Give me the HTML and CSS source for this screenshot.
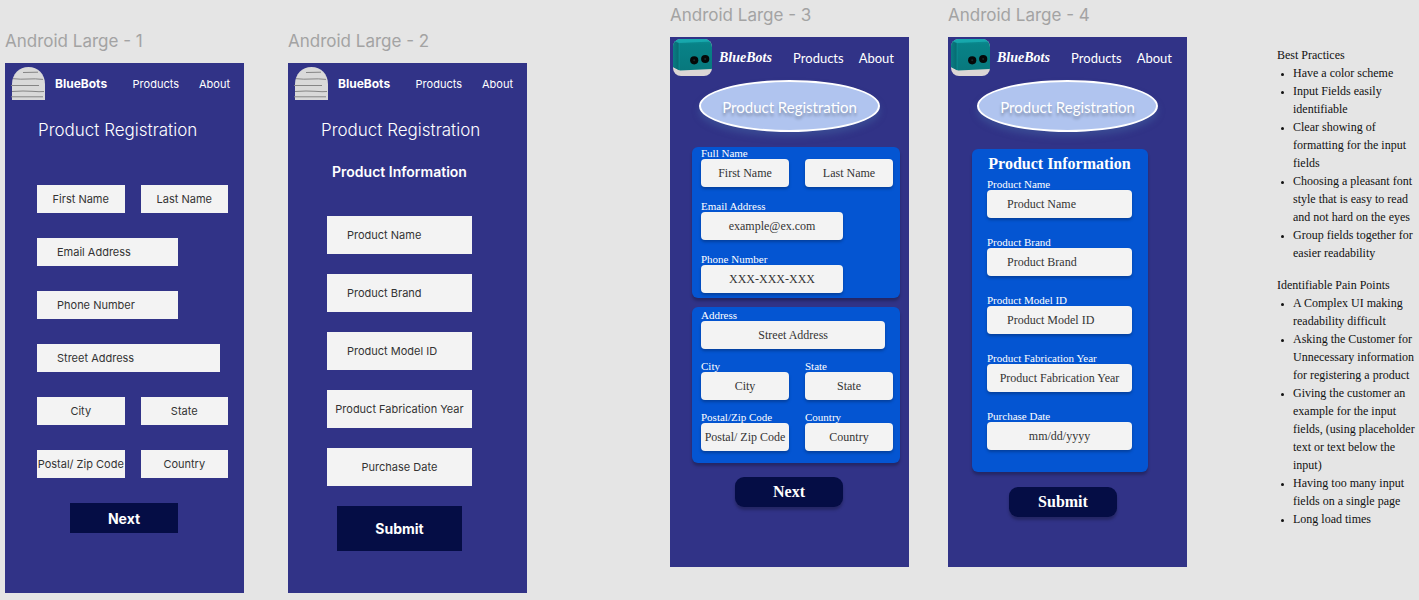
FILE: index.html
```html
<!DOCTYPE html>
<html lang="en">
<head>
<meta charset="utf-8">
<meta name="viewport" content="width=device-width, initial-scale=1">
<title>BlueBots product registration</title>
<link rel="stylesheet" href="styles.css">
</head>
<body>
<svg class="defs" width="0" height="0" aria-hidden="true">
  <defs>
    <linearGradient id="teal" x1="0" y1="0" x2="0" y2="1">
      <stop offset="0" stop-color="#0d9197"/>
      <stop offset=".18" stop-color="#088287"/>
      <stop offset="1" stop-color="#08787d"/>
    </linearGradient>
    <linearGradient id="side" x1="0" y1="0" x2="1" y2="0">
      <stop offset="0" stop-color="#0a7c84"/>
      <stop offset="1" stop-color="#066a70"/>
    </linearGradient>
    <clipPath id="round"><rect width="39" height="37" rx="8"/></clipPath>
    <symbol id="arch" viewBox="0 0 34 33">
      <path d="M1 33V17C1 7 8 0 17.500 0S34 7 34 17V33Z" fill="#d9d9d9"/>
      <g fill="none" stroke="#858585" stroke-width="1">
        <path d="M12 5.500l15-.3M2 11.700q8 .8 15 .3t15 .4M0 18.500h28M1 24.500q12-.9 20-.2t12 .2M0 29.800h32"/>
      </g>
    </symbol>
    <symbol id="bot" viewBox="0 0 39 37">
      <g clip-path="url(#round)">
        <rect width="39" height="37" fill="#dcd6d5"/>
        <path d="M0 0H39V30L7 31.500L0 28Z" fill="url(#teal)"/>
        <path d="M0 0L6 4V31.200L0 28Z" fill="url(#side)"/>
        <path d="M0 0H39V2.500L6 4L0 2Z" fill="#1cb3b8" opacity=".7"/>
        <path d="M6 4V31" stroke="#109a9f" stroke-width="1" opacity=".6"/>
        <circle cx="21.200" cy="21.300" r="4.100" fill="#050808"/>
        <circle cx="32.200" cy="20" r="4.100" fill="#050808"/>
        <circle cx="21.200" cy="21.300" r="1" fill="#1c2a2b"/>
        <circle cx="32.200" cy="20" r="1" fill="#1c2a2b"/>
      </g>
    </symbol>
  </defs>
</svg>
<main class="canvas">
  <section class="artboard artboard--low">
    <h2 class="artboard__name">Android Large - 1</h2>
    <div class="screen">
      <nav class="nav">
        <svg class="nav__arch" role="img" aria-label="Logo"><use href="#arch"/></svg>
        <a class="nav__brand" href="#">BlueBots</a>
        <a class="nav__first" href="#">Products</a>
        <a href="#">About</a>
      </nav>
      <h1 class="title">Product Registration</h1>
      <form class="contact">
        <input class="field" aria-label="First Name" placeholder="First Name">
        <input class="field" aria-label="Last Name" placeholder="Last Name">
        <input class="field field--start field--medium" aria-label="Email Address" placeholder="Email Address">
        <input class="field field--start field--medium" aria-label="Phone Number" placeholder="Phone Number">
        <input class="field field--start field--long" aria-label="Street Address" placeholder="Street Address">
        <input class="field" aria-label="City" placeholder="City">
        <input class="field" aria-label="State" placeholder="State">
        <input class="field" aria-label="Postal/ Zip Code" placeholder="Postal/ Zip Code">
        <input class="field" aria-label="Country" placeholder="Country">
        <button class="button button--plain" type="button">Next</button>
      </form>
    </div>
  </section>

  <section class="artboard artboard--low">
    <h2 class="artboard__name">Android Large - 2</h2>
    <div class="screen">
      <nav class="nav">
        <svg class="nav__arch" role="img" aria-label="Logo"><use href="#arch"/></svg>
        <a class="nav__brand" href="#">BlueBots</a>
        <a class="nav__first" href="#">Products</a>
        <a href="#">About</a>
      </nav>
      <h1 class="title">Product Registration</h1>
      <form class="product">
        <h2 class="product__heading">Product Information</h2>
        <input class="field field--tall field--start" aria-label="Product Name" placeholder="Product Name">
        <input class="field field--tall field--start" aria-label="Product Brand" placeholder="Product Brand">
        <input class="field field--tall field--start" aria-label="Product Model ID" placeholder="Product Model ID">
        <input class="field field--tall" aria-label="Product Fabrication Year" placeholder="Product Fabrication Year">
        <input class="field field--tall" aria-label="Purchase Date" placeholder="Purchase Date">
        <button class="button button--large" type="button">Submit</button>
      </form>
    </div>
  </section>

  <section class="artboard">
    <h2 class="artboard__name">Android Large - 3</h2>
    <div class="screen screen--styled">
      <nav class="nav nav--styled">
        <svg class="nav__bot" role="img" aria-label="Robot logo"><use href="#bot"/></svg>
        <a class="nav__brand nav__brand--script" href="#">BlueBots</a>
        <a class="nav__first" href="#">Products</a>
        <a href="#">About</a>
      </nav>
      <h1 class="badge">Product Registration</h1>
      <form class="styled-form">
        <div class="panel">
          <div class="group"><label for="first">Full Name</label><input class="field" id="first" placeholder="First Name"></div>
          <div class="group"><input class="field" aria-label="Last Name" placeholder="Last Name"></div>
          <div class="group group--medium"><label for="email">Email Address</label><input class="field" id="email" type="email" placeholder="example@ex.com"></div>
          <div class="group group--medium"><label for="phone">Phone Number</label><input class="field" id="phone" type="tel" placeholder="XXX-XXX-XXX"></div>
        </div>
        <div class="panel panel--address">
          <div class="group group--long"><label for="street">Address</label><input class="field" id="street" placeholder="Street Address"></div>
          <div class="group"><label for="city">City</label><input class="field" id="city" placeholder="City"></div>
          <div class="group"><label for="state">State</label><input class="field" id="state" placeholder="State"></div>
          <div class="group"><label for="zip">Postal/Zip Code</label><input class="field" id="zip" placeholder="Postal/ Zip Code"></div>
          <div class="group"><label for="country">Country</label><input class="field" id="country" placeholder="Country"></div>
        </div>
        <button class="button button--round" type="button">Next</button>
      </form>
    </div>
  </section>

  <section class="artboard">
    <h2 class="artboard__name">Android Large - 4</h2>
    <div class="screen screen--styled">
      <nav class="nav nav--styled">
        <svg class="nav__bot" role="img" aria-label="Robot logo"><use href="#bot"/></svg>
        <a class="nav__brand nav__brand--script" href="#">BlueBots</a>
        <a class="nav__first" href="#">Products</a>
        <a href="#">About</a>
      </nav>
      <h1 class="badge">Product Registration</h1>
      <form class="styled-form styled-form--product">
        <div class="panel panel--product">
          <h2 class="panel__heading">Product Information</h2>
          <div class="group"><label for="name">Product Name</label><input class="field field--start" id="name" placeholder="Product Name"></div>
          <div class="group"><label for="make">Product Brand</label><input class="field field--start" id="make" placeholder="Product Brand"></div>
          <div class="group"><label for="model">Product Model ID</label><input class="field field--start" id="model" placeholder="Product Model ID"></div>
          <div class="group"><label for="year">Product Fabrication Year</label><input class="field" id="year" placeholder="Product Fabrication Year"></div>
          <div class="group"><label for="date">Purchase Date</label><input class="field" id="date" placeholder="mm/dd/yyyy"></div>
        </div>
        <button class="button button--round" type="button">Submit</button>
      </form>
    </div>
  </section>

  <aside class="notes">
    <h2>Best Practices</h2>
    <ul>
      <li>Have a color scheme</li>
      <li>Input Fields easily identifiable</li>
      <li>Clear showing of formatting for the input fields</li>
      <li>Choosing a pleasant font style that is easy to read and not hard on the eyes</li>
      <li>Group fields together for easier readability</li>
    </ul>
    <h2>Identifiable Pain Points</h2>
    <ul>
      <li>A Complex UI making readability difficult</li>
      <li>Asking the Customer for Unnecessary information for registering a product</li>
      <li>Giving the customer an example for the input fields, (using placeholder text or text below the input)</li>
      <li>Having too many input fields on a single page</li>
      <li>Long load times</li>
    </ul>
  </aside>
</main>
</body>
</html>
```
FILE: styles.css
```css
* { box-sizing: border-box; }

body {
  margin: 0;
  background: #e5e5e5;
  font-family: Inter, "Liberation Sans", sans-serif;
}

h1, h2, ul { margin: 0; font-weight: 400; }

.defs { position: absolute; }

.canvas {
  display: grid;
  grid-template-columns:
    minmax(0, 5fr) minmax(0, 239fr) minmax(0, 44fr) minmax(0, 239fr)
    minmax(0, 143fr) minmax(0, 239fr) minmax(0, 39fr) minmax(0, 239fr)
    minmax(0, 90fr) minmax(0, 142fr);
  align-items: start;
}

.artboard:nth-child(1) { grid-column: 2; }
.artboard:nth-child(2) { grid-column: 4; }
.artboard:nth-child(3) { grid-column: 6; }
.artboard:nth-child(4) { grid-column: 8; }

.artboard { padding-top: 5px; }
.artboard--low { padding-top: 31px; }

.artboard__name {
  margin-bottom: 12px;
  font-size: 17px;
  line-height: 20px;
  color: #a3a3a3;
  white-space: nowrap;
}

.screen {
  display: flex;
  flex-direction: column;
  min-height: 530px;
  background: #313387;
  color: #fff;
}

.nav {
  display: flex;
  align-items: center;
  height: 41px;
  padding: 0 14px 0 6px;
  gap: 20px;
  font-size: 11px;
}

.nav a { color: #fff; text-decoration: none; }
.nav__arch { flex: none; width: 34px; height: 33px; }
.nav .nav__brand { margin-left: -10px; font-size: 12px; font-weight: 700; }
.nav__first { margin-left: auto; }

.title {
  margin-top: 16px;
  padding-left: 33px;
  font-size: 17px;
  font-weight: 300;
  line-height: 20px;
  white-space: nowrap;
}

.field {
  width: 100%;
  min-width: 0;
  height: 28px;
  padding: 0;
  border: 0;
  border-radius: 0;
  background: #f3f3f3;
  color: #333;
  font: inherit;
  font-size: 11px;
  text-align: center;
}

.field::placeholder { color: #333; opacity: 1; }
.field--start { padding-left: 20px; text-align: left; }
.field--tall { height: 38px; }

.contact {
  display: grid;
  grid-template-columns: 1fr 1fr;
  gap: 25px 16px;
  padding: 45px 16px 0 32px;
}

.field--medium, .field--long { grid-column: 1 / -1; }
.field--medium { width: 74%; }
.field--long { width: 96%; }

.button {
  width: 108px;
  height: 30px;
  padding: 0;
  border: 0;
  background: #050d45;
  color: #fff;
  font: inherit;
  font-size: 14px;
  font-weight: 700;
}

.button--plain { grid-column: 1 / -1; margin-left: 33px; }

.product {
  display: flex;
  flex-direction: column;
  align-items: center;
  gap: 20px;
  padding: 22px 55px 0 39px;
}

.product__heading {
  margin-bottom: 14px;
  font-size: 14px;
  font-weight: 600;
  line-height: 20px;
  white-space: nowrap;
}

.button--large { width: 125px; height: 45px; }

.screen--styled { font-family: "Liberation Serif", serif; }

.nav--styled {
  height: 43px;
  padding: 0 15px 2px 3px;
  gap: 15px;
  font-family: Lato, sans-serif;
  font-size: 13px;
}

.nav__bot { flex: none; width: 39px; height: 37px; }

.nav .nav__brand--script {
  margin-left: -8px;
  font-family: "Liberation Serif", serif;
  font-size: 14px;
  font-style: italic;
}

.badge {
  align-self: center;
  width: 76%;
  height: 52px;
  border: 2px solid #fff;
  border-radius: 50%;
  background: #b0c4ef;
  box-shadow: 0 5px 6px rgba(65, 95, 160, .5);
  font-family: Lato, sans-serif;
  font-size: 15px;
  line-height: 50px;
  text-align: center;
  text-shadow: 0 3px 3px rgba(0, 0, 0, .3);
  white-space: nowrap;
}

.styled-form {
  display: flex;
  flex-direction: column;
  align-items: flex-start;
  padding: 15px 9px 0 22px;
}

.panel {
  display: grid;
  grid-template-columns: 1fr 1fr;
  gap: 13px 16px;
  width: 100%;
  padding: 0 7px 5px 9px;
  border-radius: 6px;
  background: #0455d2;
  box-shadow: 0 3px 3px rgba(0, 0, 0, .25);
}

.panel--address { margin: 9px 0 14px; padding: 2px 7px 12px 9px; row-gap: 11px; }

.group {
  display: flex;
  flex-direction: column;
  justify-content: flex-end;
  min-width: 0;
  font-size: 11px;
  line-height: 12px;
}

.group label { white-space: nowrap; }
.group--medium, .group--long { grid-column: 1 / -1; }
.group--medium { width: 74%; }
.group--long { width: 96%; }

.group .field {
  border-radius: 4px;
  box-shadow: 0 2px 3px rgba(0, 0, 0, .25);
  font-size: 12px;
}

.button--round {
  margin-left: 43px;
  border-radius: 9px;
  box-shadow: 0 3px 3px rgba(0, 0, 0, .25);
  font-size: 16px;
}

.styled-form--product { padding: 17px 39px 0 24px; }
.styled-form--product .button { margin-left: 37px; }

.panel--product {
  grid-template-columns: 1fr;
  gap: 18px;
  margin-bottom: 15px;
  padding: 4px 16px 22px 15px;
}

.panel__heading {
  justify-self: center;
  margin-bottom: -15px;
  font-size: 16px;
  font-weight: 700;
  line-height: 22px;
  white-space: nowrap;
}

.notes {
  grid-column: 10;
  padding-top: 46px;
  color: #111;
  font-family: "Liberation Serif", serif;
  font-size: 12px;
  line-height: 18px;
}

.notes h2 { font-size: 12px; white-space: nowrap; }
.notes ul { margin-bottom: 14px; padding: 0 2px 0 16px; }
.notes li::marker { font-size: 9px; }
```
